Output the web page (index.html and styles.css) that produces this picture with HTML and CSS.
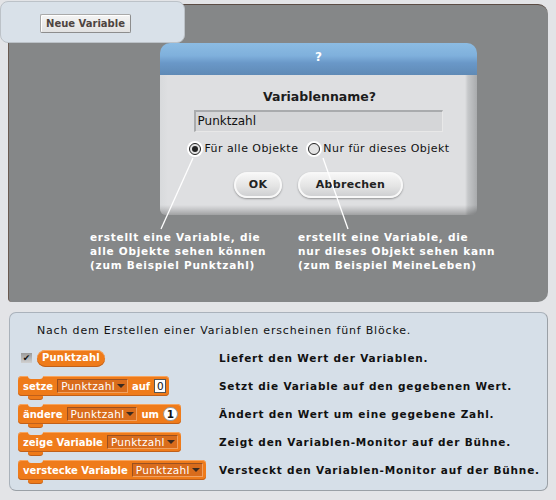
FILE: index.html
```html
<!DOCTYPE html>
<html lang="de">
<head>
<meta charset="utf-8">
<link rel="stylesheet" href="styles.css">
</head>
<body>
<div class="page">
  <div class="tab"><span class="btn-new">Neue Variable</span></div>
  <div class="stage">
    <div class="dialog">
      <div class="dlg-title">?</div>
      <div class="dlg-body">
        <div class="dlg-q">Variablenname?</div>
        <div class="dlg-input">Punktzahl</div>
        <div class="dlg-radios">
          <span class="radio"><span class="dot on"></span>Für alle Objekte</span>
          <span class="radio"><span class="dot"></span>Nur für dieses Objekt</span>
        </div>
        <div class="dlg-btns">
          <span class="pill ok">OK</span>
          <span class="pill cancel">Abbrechen</span>
        </div>
      </div>
    </div>
    <div class="notes">
      <p class="note n1">erstellt eine Variable, die<br>alle Objekte sehen können<br>(zum Beispiel Punktzahl)</p>
      <p class="note n2">erstellt eine Variable, die<br>nur dieses Objekt sehen kann<br>(zum Beispiel MeineLeben)</p>
    </div>
    <svg class="callouts" width="540" height="298" viewBox="0 0 540 298">
      <line x1="184" y1="153" x2="152" y2="224" stroke="#fff" stroke-width="1.3"/>
      <line x1="314" y1="153" x2="339" y2="224" stroke="#fff" stroke-width="1.3"/>
    </svg>
  </div>
  <div class="panel">
    <p class="intro">Nach dem Erstellen einer Variablen erscheinen fünf Blöcke.</p>
    <div class="rows">
      <div class="cell">
        <span class="check">✔</span><span class="reporter">Punktzahl</span>
      </div>
      <div class="desc">Liefert den Wert der Variablen.</div>

      <div class="cell">
        <span class="block">setze<span class="dd">Punktzahl</span>auf<span class="num">0</span></span>
      </div>
      <div class="desc">Setzt die Variable auf den gegebenen Wert.</div>

      <div class="cell">
        <span class="block">ändere<span class="dd">Punktzahl</span>um<span class="num round">1</span></span>
      </div>
      <div class="desc">Ändert den Wert um eine gegebene Zahl.</div>

      <div class="cell">
        <span class="block">zeige Variable<span class="dd">Punktzahl</span></span>
      </div>
      <div class="desc">Zeigt den Variablen-Monitor auf der Bühne.</div>

      <div class="cell">
        <span class="block">verstecke Variable<span class="dd">Punktzahl</span></span>
      </div>
      <div class="desc">Versteckt den Variablen-Monitor auf der Bühne.</div>
    </div>
  </div>
</div>
</body>
</html>
```

FILE: styles.css
```css
* { box-sizing: border-box; }
html, body { margin: 0; padding: 0; }
body {
  background: #e3e4e7;
  font-family: "DejaVu Sans", Verdana, sans-serif;
  width: 556px;
  height: 500px;
  overflow: hidden;
}
.page { position: relative; padding: 4px 8px 0 8px; }

.tab {
  position: absolute;
  left: 0; top: 1px;
  width: 185px; height: 42px;
  background: #d9e1e9;
  border: 1px solid #bcc2c8;
  border-radius: 8px;
  z-index: 2;
}
.btn-new {
  position: absolute;
  left: 39px; top: 12px;
  width: 91px; height: 19px;
  background: linear-gradient(#f4f4f4, #e2e2e2);
  border: 1px solid #a9a9a9;
  border-right-color: #8d8d8d;
  border-bottom-color: #8d8d8d;
  border-radius: 2px;
  box-shadow: inset 1px 1px 0 #fff;
  font-size: 10px; font-weight: bold;
  color: #4e4440;
  text-align: center;
  line-height: 17px;
}

.stage {
  position: relative;
  width: 540px; height: 298px;
  background: #858788;
  border-top: 1px solid #5b4c44;
  border-left: 1px solid #6a5a50;
  border-radius: 0 10px 10px 4px;
  padding: 38px 0 0 151px;
}
.dialog {
  width: 317px; height: 172px;
  border-radius: 10px 10px 6px 6px;
  overflow: hidden;
  display: flex; flex-direction: column;
}
.dlg-title {
  height: 32px;
  background: linear-gradient(#8cbce3 0%, #7fb0dc 40%, #6a98c8 62%, #5f8ab6 100%);
  color: #fff;
  font-weight: bold; font-size: 12px;
  text-align: center;
  line-height: 28px;
}
.dlg-body {
  flex: 1;
  background:
    linear-gradient(to bottom, rgba(0,0,0,0) 0, rgba(0,0,0,0) calc(100% - 10px), rgba(0,0,0,.10) calc(100% - 6px), rgba(0,0,0,.28) 100%),
    linear-gradient(to right, #d8dadc 0, #dedfe1 8px, #dedfe1 calc(100% - 12px), #c5c7c9 calc(100% - 9px), #a9abad 100%);
  padding: 14px 0 0 0;
  display: flex; flex-direction: column; align-items: center;
}
.dlg-q {
  font-weight: bold; font-size: 12.5px;
  color: #1c1c1c;
  line-height: 16px;
  margin-left: 2px;
}
.dlg-input {
  width: 249px; height: 22px;
  margin: 5px 0 0 -1px;
  background: #d5d6d8;
  border-top: 2px solid #a9abad;
  border-left: 2px solid #a9abad;
  border-right: 1px solid #e8e8e8;
  border-bottom: 1px solid #e8e8e8;
  font-size: 12px; color: #111;
  padding-left: 2px;
  line-height: 19px;
}
.dlg-radios {
  display: flex; gap: 10px;
  margin: 10px 0 0 2px;
  font-size: 11px; color: #111;
  line-height: 14px;
  letter-spacing: 0.45px;
}
.radio { display: flex; align-items: center; gap: 3px; }
.dot {
  width: 12px; height: 12px;
  border-radius: 50%;
  background: #e4e4e4;
  border: 1px solid #222;
  box-shadow: 0 0 0 2px #fff;
  position: relative;
}
.dot.on::after {
  content: "";
  position: absolute;
  left: 2px; top: 2px;
  width: 6px; height: 6px;
  border-radius: 50%;
  background: #222;
}
.dlg-btns {
  display: flex; gap: 16px;
  margin: 16px 0 0 0;
}
.pill {
  height: 26px;
  border-radius: 13px;
  background: linear-gradient(#f6f6f6 0%, #e4e4e4 55%, #cfd0d2 100%);
  border: 2px solid #f8f8f8;
  box-shadow: 0 1px 2px rgba(0,0,0,.35);
  font-weight: bold; font-size: 11px; color: #222;
  line-height: 22px;
  text-align: center;
  letter-spacing: 0.3px;
}
.pill.ok { width: 48px; }
.pill.cancel { width: 105px; }

.notes {
  display: flex;
  margin: 15px 0 0 -70px;
}
.note {
  margin: 0;
  color: #fff;
  font-weight: bold; font-size: 10.5px;
  line-height: 14px;
  letter-spacing: 0.75px;
}
.n1 { width: 208px; }
.callouts { position: absolute; left: 0; top: 0; pointer-events: none; }

.panel {
  margin: 10px 0 0 1px;
  width: 539px; height: 179px;
  background: #d6dfe8;
  border: 1px solid #aab2bb;
  border-right-color: #9aa0a6;
  border-bottom-color: #9aa0a6;
  border-radius: 7px;
  padding: 10px 0 0 8px;
}
.intro {
  margin: 0 0 0 19px;
  font-size: 11px; color: #111;
  line-height: 16px;
  letter-spacing: 0.82px;
}
.rows {
  display: grid;
  grid-template-columns: 201px 1fr;
  grid-auto-rows: 28px;
  margin-top: 5px;
}
.cell { display: flex; align-items: center; }
.desc {
  display: flex; align-items: center;
  font-weight: bold; font-size: 10.5px; color: #111;
  letter-spacing: 0.8px;
  white-space: nowrap;
}
.check {
  width: 11px; height: 10px;
  margin: 0 5px 0 3px;
  background: linear-gradient(#9a9a9a, #d0d0d0);
  font-size: 9px; line-height: 10px;
  color: #111; text-align: center;
}
.reporter {
  background: #ef7b1a;
  color: #fff;
  font-weight: bold; font-size: 10px;
  height: 17px; line-height: 16px;
  padding: 0 5px;
  border-radius: 9px;
  letter-spacing: 0.2px;
  box-shadow: inset 0 -1px 0 #c0601a, inset 0 1px 0 #f8a45c;
}
.block {
  position: relative;
  display: inline-flex; align-items: center;
  gap: 4px;
  height: 20px;
  padding: 0 3px 0 5px;
  background: #ef7b1a;
  border-radius: 4px;
  color: #fff;
  font-weight: bold; font-size: 10px;
  white-space: nowrap;
  box-shadow: inset 0 -1px 0 #c0601a, inset 0 1px 0 #f8a45c;
}
.block::before {
  content: "";
  position: absolute;
  left: 10px; top: 0;
  width: 15px; height: 3px;
  background: #d6dfe8;
  border-radius: 0 0 3px 3px;
}
.block::after {
  content: "";
  position: absolute;
  left: 10px; bottom: -3px;
  width: 15px; height: 3px;
  background: #ef7b1a;
  border-radius: 0 0 3px 3px;
  box-shadow: 0 1px 0 #c0601a;
}
.dd {
  display: inline-flex; align-items: center;
  height: 14px;
  padding: 0 12px 0 3px;
  position: relative;
  background: #d96c1c;
  border: 1px solid #9a5020;
  border-right-color: #f0a060;
  border-bottom-color: #f0a060;
  font-weight: normal; font-size: 10.5px;
  color: #fff;
  letter-spacing: 0.3px;
}
.dd::after {
  content: "";
  position: absolute;
  right: 2px; top: 4px;
  border-left: 4px solid transparent;
  border-right: 4px solid transparent;
  border-top: 4px solid #3a2a20;
}
.num {
  display: inline-block;
  width: 12px; height: 14px;
  background: #fff;
  border: 1px solid #555;
  color: #111;
  font-weight: normal; font-size: 10.5px;
  line-height: 12px; text-align: center;
}
.num.round {
  width: 15px;
  border-radius: 7px;
  border-color: #999;
  font-weight: bold;
}
```
